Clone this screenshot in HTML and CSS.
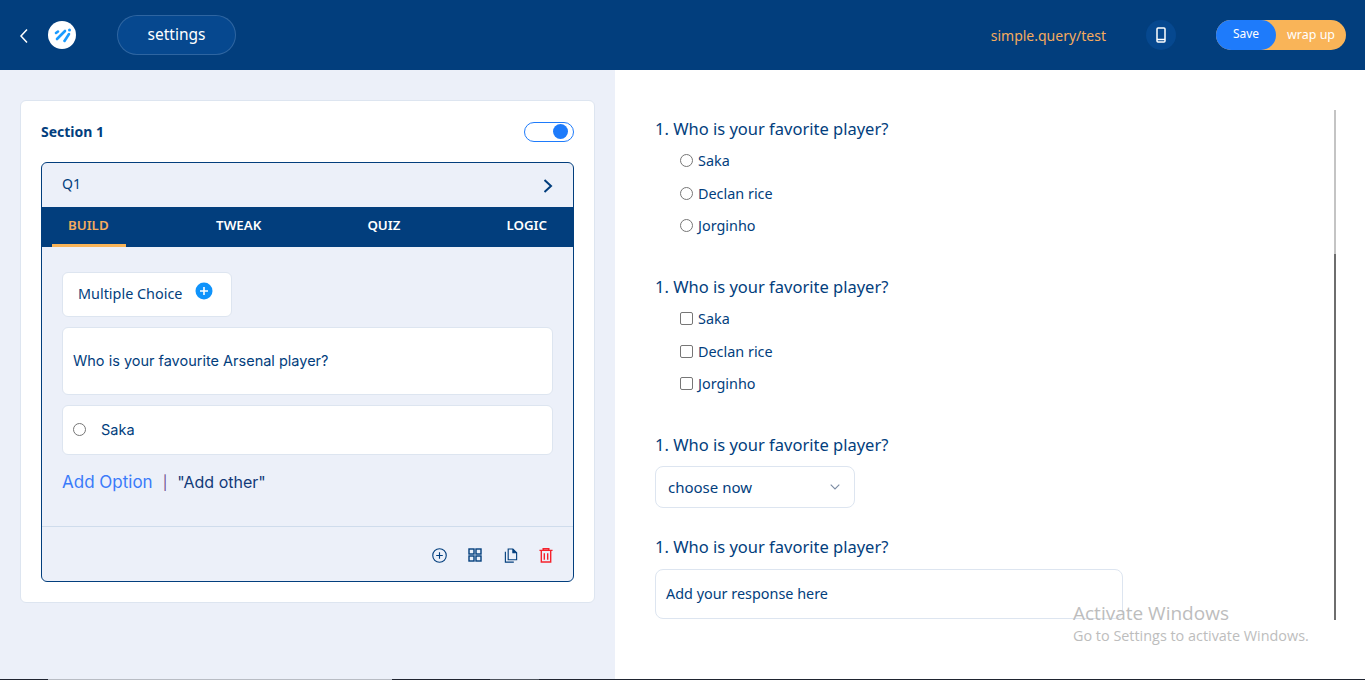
FILE: index.html
```html
<!DOCTYPE html>
<html lang="en">
<head>
    <meta charset="UTF-8">
    <meta name="viewport" content="width=device-width, initial-scale=1.0">
    <title>settings</title>
    <link rel="stylesheet" href="styles.css">
</head>
<body>
<div class="page">
    <!-- Top bar -->
    <header class="topbar">
        <div class="topbar-left">
            <svg class="back-icon" width="10" height="16" viewBox="0 0 10 16"><path d="M8 1.5 2 8l6 6.5" fill="none" stroke="#fff" stroke-width="1.5"/></svg>
            <svg class="logo" width="28" height="28" viewBox="0 0 28 28">
                <circle cx="14" cy="14" r="14" fill="#fff"/>
                <g fill="none" stroke="#1a9bff" stroke-width="2.6" stroke-linecap="round">
                    <path d="M8 12 10 10.500"/>
                    <path d="M9 18 17 10"/>
                    <path d="M16.500 20 21 13"/>
                </g>
                <circle cx="21.500" cy="9" r="1.500" fill="#1a9bff"/>
            </svg>
            <div class="settings-pill">settings</div>
        </div>
        <div class="topbar-right">
            <span class="test-link">simple.query/test</span>
            <div class="phone-btn">
                <svg width="10" height="16" viewBox="0 0 10 16"><rect x="1" y="1" width="8" height="14" rx="1" fill="none" stroke="#fff" stroke-width="1.5"/><path d="M1 12.500h8" stroke="#fff" stroke-width="1.500"/></svg>
            </div>
            <div class="save-toggle">
                <span class="save-btn">Save</span>
                <span class="wrap-btn">wrap up</span>
            </div>
        </div>
    </header>

    <main class="main">
        <!-- Builder -->
        <section class="builder">
            <div class="section-card">
                <div class="section-head">
                    <h2>Section 1</h2>
                    <div class="switch"><span class="switch-dot"></span></div>
                </div>
                <div class="question-card">
                    <div class="q-head">
                        <span>Q1</span>
                        <svg class="q-arrow" width="10" height="14" viewBox="0 0 10 14"><path d="M1.500 1 8 7l-6.500 6" fill="none" stroke="#023e7d" stroke-width="2"/></svg>
                    </div>
                    <nav class="tabs">
                        <a class="tab active">BUILD</a>
                        <a class="tab">TWEAK</a>
                        <a class="tab">QUIZ</a>
                        <a class="tab">LOGIC</a>
                    </nav>
                    <div class="q-body">
                        <div class="type-box">
                            <span>Multiple Choice</span>
                            <svg class="plus" width="18" height="18" viewBox="0 0 18 18"><circle cx="9" cy="9" r="8.500" fill="#0f93fb"/><path d="M5 9h8M9 5v8" stroke="#fff" stroke-width="1.600"/></svg>
                        </div>
                        <div class="q-text">Who is your favourite Arsenal player?</div>
                        <div class="q-option"><span class="radio"></span>Saka</div>
                        <div class="add-row">
                            <a class="add-option">Add Option</a>
                            <span class="sep">|</span>
                            <a class="add-other">"Add other"</a>
                        </div>
                    </div>
                    <div class="q-foot">
                        <svg width="15" height="15" viewBox="0 0 16 16" fill="none" stroke="#023e7d" stroke-width="1.200"><circle cx="8" cy="8" r="7.200"/><path d="M4.500 8h7M8 4.500v7"/></svg>
                        <svg width="14" height="14" viewBox="0 0 14 14" fill="none" stroke="#023e7d" stroke-width="1.400"><rect x="1" y="1" width="5" height="5"/><rect x="8" y="1" width="5" height="5"/><rect x="1" y="8" width="5" height="5"/><rect x="8" y="8" width="5" height="5"/></svg>
                        <svg width="14" height="15" viewBox="0 0 14 16" fill="none" stroke="#023e7d" stroke-width="1.200"><path d="M4 1h5l4 4v7.500H4z"/><path d="M9 1v4h4" fill="#023e7d"/><path d="M1 4v11h9"/></svg>
                        <svg width="14" height="15" viewBox="0 0 14 16" fill="none" stroke="#f5222d" stroke-width="1.500"><path d="M0 2.500h14M4 2V.8h6V2"/><path d="M2 3v12h10V3"/><path d="M5.200 5.500v7M8.800 5.500v7"/></svg>
                    </div>
                </div>
            </div>
        </section>

        <!-- Preview -->
        <section class="preview">
            <div class="preview-list">
                <div class="pv-question">
                    <h3>1. Who is your favorite player?</h3>
                    <label class="pv-option"><span class="radio"></span>Saka</label>
                    <label class="pv-option"><span class="radio"></span>Declan rice</label>
                    <label class="pv-option"><span class="radio"></span>Jorginho</label>
                </div>
                <div class="pv-question">
                    <h3>1. Who is your favorite player?</h3>
                    <label class="pv-option"><span class="check"></span>Saka</label>
                    <label class="pv-option"><span class="check"></span>Declan rice</label>
                    <label class="pv-option"><span class="check"></span>Jorginho</label>
                </div>
                <div class="pv-question short">
                    <h3>1. Who is your favorite player?</h3>
                    <div class="pv-select">
                        <span>choose now</span>
                        <svg width="10" height="6" viewBox="0 0 10 6"><path d="M.7.700 5 5l4.300-4.300" fill="none" stroke="#7b8ba3" stroke-width="1.100"/></svg>
                    </div>
                </div>
                <div class="pv-question last">
                    <h3>1. Who is your favorite player?</h3>
                    <div class="pv-input">Add your response here</div>
                </div>
            </div>
            <div class="scrollbar"><div class="scroll-top"></div></div>
        </section>
    </main>

    <div class="taskbar">
        <span class="tb-dark w48"></span>
        <span class="tb-grey"></span>
        <span class="tb-dark w98"></span>
        <span class="tb-mid"></span>
        <span class="tb-dark fill"></span>
    </div>

    <div class="watermark">
        <div class="wm-title">Activate Windows</div>
        <div class="wm-sub">Go to Settings to activate Windows.</div>
    </div>
</div>
</body>
</html>
```

FILE: styles.css
```css
* {
    box-sizing: border-box;
}
body {
    margin: 0;
    font-family: "Noto Sans", Arial, sans-serif;
    color: #023e7d;
    background: #fff;
}
.page {
    position: relative;
    width: 1365px;
    height: 680px;
    display: flex;
    flex-direction: column;
    overflow: hidden;
}

/* top bar */
.topbar {
    height: 70px;
    flex: none;
    background: #023e7d;
    display: flex;
    justify-content: space-between;
    align-items: center;
    padding: 0 19px;
}
.topbar-left, .topbar-right {
    display: flex;
    align-items: center;
}
.back-icon {
    margin-top: 2px;
}
.logo {
    margin-left: 19px;
}
.settings-pill {
    width: 119px;
    height: 40px;
    margin-left: 41px;
    border: 1px solid rgba(255, 255, 255, 0.16);
    border-radius: 20px;
    background: #06488f;
    color: #fff;
    font-size: 15.500px;
    line-height: 36px;
    text-align: center;
}
.test-link {
    color: #f5ab5d;
    font-size: 14px;
    margin-right: 1px;
}
.phone-btn {
    width: 30px;
    height: 30px;
    margin-left: 39px;
    border-radius: 50%;
    background: #06488f;
    display: flex;
    justify-content: center;
    align-items: center;
}
.save-toggle {
    width: 130px;
    height: 30px;
    margin-left: 40px;
    margin-top: -1px;
    border-radius: 15px;
    background: #f9b458;
    color: #fff;
    font-size: 12px;
    display: flex;
    align-items: center;
}
.save-btn {
    width: 60px;
    height: 30px;
    border-radius: 15px;
    background: #1e7bfb;
    text-align: center;
    line-height: 27px;
}
.wrap-btn {
    flex: 1;
    font-size: 12.500px;
    text-align: center;
    line-height: 27px;
}

/* layout */
.main {
    flex: 1;
    display: flex;
    min-height: 0;
}
.builder {
    width: 615px;
    flex: none;
    background: #ecf0f9;
    padding: 30px 20px;
}
.section-card {
    height: 503px;
    background: #fff;
    border: 1px solid #dde5f0;
    border-radius: 6px;
    padding: 0 20px;
}
.section-head {
    height: 61px;
    display: flex;
    justify-content: space-between;
    align-items: center;
}
.section-head h2 {
    margin: 0;
    font-size: 14px;
    font-weight: 700;
}
.switch {
    width: 50px;
    height: 20px;
    border: 1px solid #1e7bfb;
    border-radius: 10px;
    display: flex;
    justify-content: flex-end;
    align-items: center;
    padding-right: 5px;
}
.switch-dot {
    width: 15px;
    height: 15px;
    border-radius: 50%;
    background: #1e7bfb;
}

/* question card */
.question-card {
    height: 420px;
    border: 1px solid #023e7d;
    border-radius: 6px;
    background: #ecf0f9;
    display: flex;
    flex-direction: column;
    overflow: hidden;
}
.q-head {
    height: 44px;
    flex: none;
    display: flex;
    justify-content: space-between;
    align-items: center;
    padding: 0 20px 3px;
    font-size: 14px;
}
.q-arrow {
    margin-top: 5px;
}
.tabs {
    height: 40px;
    flex: none;
    background: #023e7d;
    display: flex;
    justify-content: space-between;
    padding: 0 26px 0 10px;
}
.tab {
    color: #fff;
    font-size: 13.300px;
    font-weight: 600;
    line-height: 36px;
}
.tab.active {
    width: 74px;
    margin-right: -16px;
    padding-left: 16px;
    color: #f5ab5d;
    border-bottom: 3px solid #f9b458;
}
.q-body {
    flex: 1;
    padding: 25px 20px 0;
}
.type-box {
    width: 170px;
    height: 45px;
    background: #fff;
    border: 1px solid #dde5f0;
    border-radius: 6px;
    display: flex;
    align-items: center;
    padding: 0 0 2px 15px;
    font-size: 14.400px;
}
.plus {
    margin-left: 13px;
    margin-top: -5px;
}
.q-text {
    height: 68px;
    margin-top: 10px;
    padding-left: 10px;
    background: #fff;
    border: 1px solid #dde5f0;
    border-radius: 6px;
    font-family: Inter, Arial, sans-serif;
    font-size: 14.500px;
    line-height: 66px;
}
.q-option {
    height: 50px;
    margin-top: 10px;
    padding: 0 0 1px 10px;
    background: #fff;
    border: 1px solid #dde5f0;
    border-radius: 6px;
    font-family: Inter, Arial, sans-serif;
    font-size: 14.500px;
    display: flex;
    align-items: center;
}
.q-option .radio {
    margin-right: 15px;
}
.add-row {
    margin-top: 17px;
    display: flex;
    align-items: center;
    font-family: Inter, Arial, sans-serif;
    font-size: 16px;
}
.add-option {
    color: #3a7bfa;
    font-size: 17px;
}
.sep {
    margin: 0 10px;
    color: #6c3f8f;
    font-size: 14px;
}
.add-other {
    color: #123a78;
}
.q-foot {
    height: 55px;
    flex: none;
    border-top: 1px solid #cfdcec;
    display: flex;
    justify-content: flex-end;
    align-items: center;
    gap: 21.500px;
    padding: 2px 20px 0 0;
}
.radio {
    width: 13px;
    height: 13px;
    flex: none;
    border: 1px solid #767676;
    border-radius: 50%;
    background: #fff;
}
.check {
    width: 13px;
    height: 13px;
    flex: none;
    border: 1px solid #767676;
    border-radius: 2px;
    background: #fff;
}

/* preview */
.preview {
    flex: 1;
    display: flex;
    padding: 40px 29px 0 40px;
}
.preview-list {
    flex: 1;
}
.pv-question {
    height: 158px;
}
.pv-question.short {
    height: 102px;
}
.pv-question h3 {
    margin: 0;
    height: 34.500px;
    font-size: 16.500px;
    font-weight: 400;
    line-height: 38px;
}
.pv-option {
    height: 32.500px;
    padding-left: 25px;
    font-size: 14.400px;
    display: flex;
    align-items: center;
    gap: 5px;
}
.pv-select {
    width: 200px;
    height: 42px;
    margin-top: 5.500px;
    border: 1px solid #dde5f0;
    border-radius: 8px;
    display: flex;
    justify-content: space-between;
    align-items: center;
    padding: 0 14px 1px 12px;
    font-size: 15px;
}
.pv-input {
    width: 468px;
    height: 50px;
    margin-top: 6.500px;
    border: 1px solid #dde5f0;
    border-radius: 8px;
    padding-left: 10px;
    font-size: 14.400px;
    line-height: 48px;
}
.scrollbar {
    width: 2px;
    height: 510px;
    background: #6e6e6e;
}
.scroll-top {
    height: 144px;
    background: #c4c4c4;
}

/* bottom strip of the desktop */
.taskbar {
    height: 1px;
    flex: none;
    display: flex;
}
.tb-dark {
    background: #1f2430;
}
.w48 {
    width: 48px;
}
.w98 {
    width: 98px;
}
.tb-grey {
    width: 344px;
    background: #b8bcc4;
}
.tb-mid {
    width: 49px;
    background: #4d525c;
}
.fill {
    flex: 1;
}

.watermark {
    position: absolute;
    left: 1073px;
    top: 600px;
    color: #bdbdbd;
    font-family: "Open Sans", Arial, sans-serif;
}
.wm-title {
    font-size: 19px;
}
.wm-sub {
    font-size: 14.400px;
}
```
